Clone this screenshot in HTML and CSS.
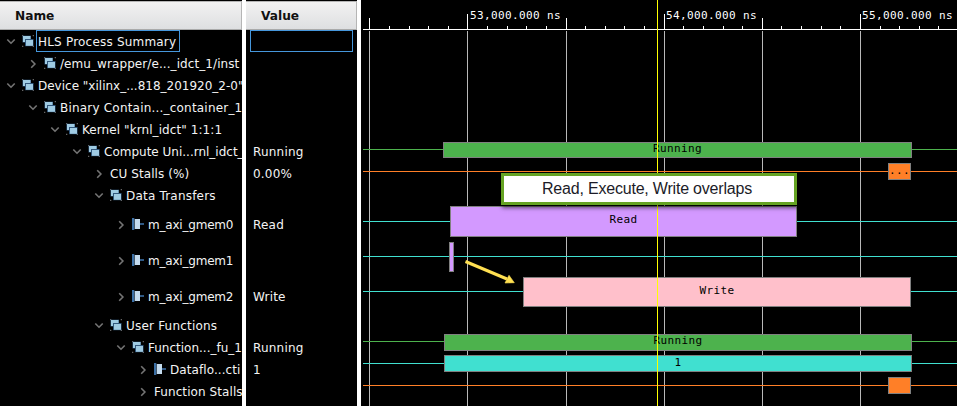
FILE: index.html
```
<!DOCTYPE html>
<html lang="en">
<head>
<meta charset="utf-8">
<title>Waveform viewer</title>
<link rel="stylesheet" href="styles.css">
</head>
<body>
<svg class="defs" aria-hidden="true">
  <symbol id="open" viewBox="0 0 10 10"><path d="M1.3 2.5 L5 6.2 L8.7 2.5" fill="none" stroke="#747474" stroke-width="1.6"/></symbol>
  <symbol id="shut" viewBox="0 0 10 10"><path d="M3.2 1.3 L6.9 5 L3.2 8.7" fill="none" stroke="#747474" stroke-width="1.6"/></symbol>
  <symbol id="group" viewBox="0 0 12 12">
    <path d="M0 0h1.3v1.3H0zM10.7 0H12v1.3h-1.3zM0 10.7h1.3V12H0zM10.7 10.7H12V12h-1.3z" fill="#666"/>
    <path d="M.5 .7h8.5v6.8H.5z" fill="#31577c"/>
    <path d="M1 1h7.5v6H1z" fill="#9fcbe3"/>
    <path d="M3 4h8.5v7.2H3z" fill="#31577c"/>
    <path d="M4 5h7v5.8H4z" fill="#9fcbe3"/>
  </symbol>
  <symbol id="port" viewBox="0 0 12 12">
    <path d="M0 0h2.3v12H0z" fill="#3b6fa5"/>
    <path d="M2.7 1h5.3v10H2.7z" fill="#c4dbee"/>
    <path d="M8 5.2H12v1.6H8z" fill="#3b6fa5"/>
  </symbol>
</svg>
<main class="viewer">
  <section class="pane names">
    <h2 class="head">Name</h2>
    <div class="row l0"><svg class="chev"><use href="#open"/></svg><svg class="icon"><use href="#group"/></svg><span class="label focus">HLS Process Summary</span></div>
    <div class="row l1"><svg class="chev"><use href="#shut"/></svg><svg class="icon"><use href="#group"/></svg><span class="label">/emu_wrapper/e..._idct_1/inst</span></div>
    <div class="row l0"><svg class="chev"><use href="#open"/></svg><svg class="icon"><use href="#group"/></svg><span class="label snug">Device "xilinx_...818_201920_2-0"</span></div>
    <div class="row l1"><svg class="chev"><use href="#open"/></svg><svg class="icon"><use href="#group"/></svg><span class="label wider">Binary Contain..._container_1</span></div>
    <div class="row l2"><svg class="chev"><use href="#open"/></svg><svg class="icon"><use href="#group"/></svg><span class="label">Kernel "krnl_idct" 1:1:1</span></div>
    <div class="row l3"><svg class="chev"><use href="#open"/></svg><svg class="icon"><use href="#group"/></svg><span class="label snug">Compute Uni...rnl_idct_</span></div>
    <div class="row l4"><svg class="chev"><use href="#shut"/></svg><span class="label">CU Stalls (%)</span></div>
    <div class="row l4"><svg class="chev"><use href="#open"/></svg><svg class="icon"><use href="#group"/></svg><span class="label wider">Data Transfers</span></div>
    <div class="row tall l5"><svg class="chev"><use href="#shut"/></svg><svg class="icon"><use href="#port"/></svg><span class="label tight">m_axi_gmem0</span></div>
    <div class="row tall l5"><svg class="chev"><use href="#shut"/></svg><svg class="icon"><use href="#port"/></svg><span class="label tight">m_axi_gmem1</span></div>
    <div class="row tall l5"><svg class="chev"><use href="#shut"/></svg><svg class="icon"><use href="#port"/></svg><span class="label tight">m_axi_gmem2</span></div>
    <div class="row l4"><svg class="chev"><use href="#open"/></svg><svg class="icon"><use href="#group"/></svg><span class="label wider">User Functions</span></div>
    <div class="row l5"><svg class="chev"><use href="#open"/></svg><svg class="icon"><use href="#group"/></svg><span class="label snug">Function..._fu_1</span></div>
    <div class="row l6"><svg class="chev"><use href="#shut"/></svg><svg class="icon"><use href="#port"/></svg><span class="label">Dataflo...cti</span></div>
    <div class="row l6"><svg class="chev"><use href="#shut"/></svg><span class="label">Function Stalls</span></div>
  </section>
  <section class="pane values">
    <h2 class="head">Value</h2>
    <div class="row"><span class="field"></span></div>
    <div class="row"></div>
    <div class="row"></div>
    <div class="row"></div>
    <div class="row"></div>
    <div class="row"><span class="value">Running</span></div>
    <div class="row"><span class="value">0.00%</span></div>
    <div class="row"></div>
    <div class="row tall"><span class="value">Read</span></div>
    <div class="row tall"></div>
    <div class="row tall"><span class="value">Write</span></div>
    <div class="row"></div>
    <div class="row"><span class="value">Running</span></div>
    <div class="row"><span class="value">1</span></div>
    <div class="row"></div>
  </section>
  <section class="wave">
    <svg class="ruler" width="596" height="406" shape-rendering="crispEdges">
      <path d="M8.5 31V406M106.5 31V406M205.5 31V406M303.5 31V406M401.5 31V406M499.5 31V406" stroke="#b9b9b9"/>
      <path d="M2 29.5H596M8.5 18V29M106.5 14V29M205.5 18V29M303.5 14V29M401.5 18V29M499.5 14V29" stroke="#fff"/>
      <path d="M28.5 26v3M48.5 26v3M67.5 26v3M87.5 26v3M126.5 26v3M146.5 26v3M165.5 26v3M185.5 26v3M224.5 26v3M244.5 26v3M263.5 26v3M283.5 26v3M322.5 26v3M342.5 26v3M362.5 26v3M381.5 26v3M420.5 26v3M440.5 26v3M460.5 26v3M479.5 26v3M519.5 26v3M538.5 26v3M558.5 26v3M577.5 26v3" stroke="#fff"/>
    </svg>
    <div class="times"><span>53,000.000 ns</span><span>54,000.000 ns</span><span>55,000.000 ns</span></div>
    <div class="tracks">
      <div class="track green"><div class="bar b-unit">Running</div></div>
      <div class="track orange"><div class="bar b-stall">...</div></div>
      <div class="track cyan wide first"><div class="bar b-read">Read</div></div>
      <div class="track cyan wide"><div class="bar b-tick"></div></div>
      <div class="track cyan wide"><div class="bar b-write">Write</div></div>
      <div class="track green functions"><div class="bar b-func">Running</div></div>
      <div class="track cyan"><div class="bar b-flow">1</div></div>
      <div class="track orange"><div class="bar b-stall"></div></div>
    </div>
    <div class="cursor"></div>
    <div class="callout">Read, Execute, Write overlaps</div>
    <svg class="arrow" viewBox="0 0 54 28"><path d="M2.5 2.5 L44 20" stroke="#ffe052" stroke-width="3" fill="none"/><path d="M51.3 23.7 L46 16.3 L42 24 Z" fill="#ffe052" stroke="#ffe052" stroke-width=".6"/></svg>
  </section>
</main>
</body>
</html>
```

FILE: styles.css
```
* { box-sizing: border-box; }
body { margin: 0; background: #000; overflow: hidden; }
.defs { display: none; }
.viewer { display: grid; grid-template-columns: 242px 111px 596px; column-gap: 4px; width: 957px; height: 406px; overflow: hidden; background: #fff; }
.pane { background: #000; color: #f4f4f4; font: 12px/22px "DejaVu Sans", sans-serif; letter-spacing: .08px; overflow: hidden; border-top: 1px solid #000; }
.head { margin: 0; height: 29px; padding-left: 15px; font: bold 12.2px/28px "DejaVu Sans", sans-serif; letter-spacing: 0; color: #111; background: linear-gradient(#f2f2f2, #dedfe1); border: 1px solid #b5b5b5; border-left: 0; border-bottom-color: #aaa; }
.row { display: flex; align-items: center; height: 22px; white-space: nowrap; }
.tall { height: 36px; }
.names .row { padding-left: calc(6px + var(--level) * 22px); }
.l0 { --level: 0; }
.l1 { --level: 1; }
.l2 { --level: 2; }
.l3 { --level: 3; }
.l4 { --level: 4; }
.l5 { --level: 5; }
.l6 { --level: 6; }
.chev { width: 10px; height: 10px; flex: none; margin-top: 2px; }
.icon { width: 12px; height: 12px; flex: none; margin-left: 6px; }
.label { margin-left: 4px; padding-top: 2px; }
.value { padding-top: 2px; letter-spacing: .2px; }
.snug { letter-spacing: 0; }
.tight { letter-spacing: -.2px; }
.wider { letter-spacing: .2px; }
.chev + .label { margin-left: 6px; }
.label.focus { width: 144px; height: 22px; margin-left: 2px; padding: 1px 0 0 1px; border: 1px solid #4697dc; line-height: 20px; letter-spacing: .2px; }
.values .row { padding-left: 7px; }
.values .row:nth-child(2) { padding-left: 4px; }
.field { width: 103px; height: 22px; border: 1px solid #4697dc; }
.wave { position: relative; background: #000; font: 11px/14px "DejaVu Sans Mono", monospace; letter-spacing: .378px; color: #fff; overflow: hidden; }
.ruler { position: absolute; inset: 0; }
.times { position: relative; display: flex; height: 138px; padding: 9px 0 0 109px; }
.times span { flex: none; width: 196px; white-space: nowrap; }
.tracks { position: relative; margin-left: 2px; }
.track { height: 22px; padding-top: 3px; background: linear-gradient(var(--c), var(--c)) 0 11px / 100% 1px no-repeat; }
.wide { height: 35px; background-position: 0 17px; }
.first { margin-top: 22px; padding-top: 2px; }
.functions { margin-top: 21px; }
.green { --c: #4db24d; }
.orange { --c: #ff7f27; }
.cyan { --c: #40e0d0; }
.bar { height: 17px; border: 1px solid #808080; background: var(--c); color: #000; text-align: center; line-height: 11px; }
.b-unit { width: 469px; height: 16px; margin: 1px 0 0 80px; }
.b-func { width: 468px; margin: 1px 0 0 81px; }
.b-flow { width: 468px; margin-left: 81px; line-height: 13px; }
.b-stall { width: 23px; margin-left: 525px; line-height: 13px; }
.b-read { width: 347px; height: 31px; margin-left: 87px; line-height: 25px; background: #d399ff; }
.b-tick { width: 5px; height: 30px; margin-left: 86px; background: #d399ff; }
.b-write { width: 388px; height: 30px; margin-left: 160px; line-height: 25px; background: #ffc0cb; }
.cursor { position: absolute; left: 296px; top: 0; width: 1px; height: 406px; background: #ff0; }
.callout { position: absolute; left: 140px; top: 173px; width: 296px; height: 32px; border: 3px solid #65a323; background: #fff; color: #1c1c28; font: 16px/25px "Liberation Sans", sans-serif; letter-spacing: -.2px; text-align: center; padding-right: 4px; box-shadow: 1px 3px 4px rgba(0, 0, 0, .55); }
.arrow { position: absolute; left: 102px; top: 259px; width: 54px; height: 28px; }
```
